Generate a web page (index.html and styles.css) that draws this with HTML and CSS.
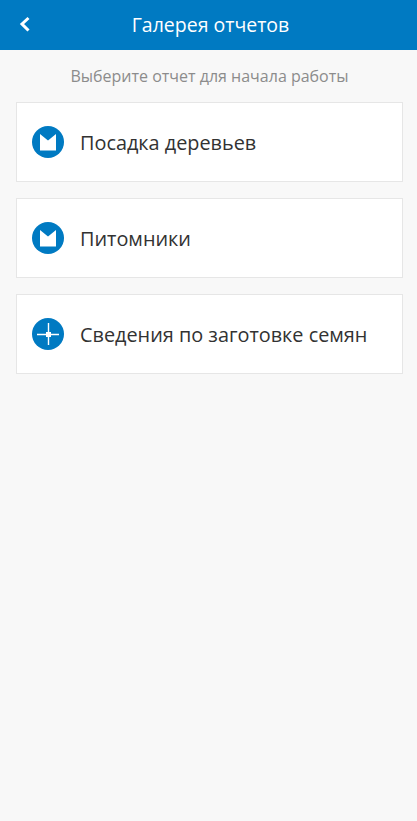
FILE: index.html
```html
<!DOCTYPE html>
<html lang="ru">
<head>
<meta charset="utf-8">
<title>Галерея отчетов</title>
<link rel="stylesheet" href="styles.css">
</head>
<body>
<header class="topbar">
  <svg class="back" width="12" height="18" viewBox="0 0 12 18"><path d="M9.5 2 L3 8 L9.5 14.5" fill="none" stroke="#fff" stroke-width="3"/></svg>
  <h1 class="title">Галерея отчетов</h1>
</header>
<main class="content">
  <p class="hint">Выберите отчет для начала работы</p>
  <ul class="list">
    <li class="card">
      <svg class="icon" width="32" height="32" viewBox="0 0 32 32"><circle cx="16" cy="16" r="16" fill="#007ac2"/><path d="M8 8 L16 14.5 L24 8 V24.5 H8 Z" fill="#fff"/></svg>
      <span class="label">Посадка деревьев</span>
    </li>
    <li class="card">
      <svg class="icon" width="32" height="32" viewBox="0 0 32 32"><circle cx="16" cy="16" r="16" fill="#007ac2"/><path d="M8 8 L16 14.5 L24 8 V24.5 H8 Z" fill="#fff"/></svg>
      <span class="label">Питомники</span>
    </li>
    <li class="card">
      <svg class="icon" width="32" height="32" viewBox="0 0 32 32"><circle cx="16" cy="16" r="16" fill="#007ac2"/><path d="M16.5 5 V27 M5 16.5 H27" stroke="#fff" stroke-width="1.4"/><rect x="14" y="14" width="5" height="5" fill="#fff"/></svg>
      <span class="label">Сведения по заготовке семян</span>
    </li>
  </ul>
</main>
</body>
</html>
```
FILE: styles.css
```css
* { box-sizing: border-box; }
html, body { margin: 0; height: 100%; }
body {
  background: #f8f8f8;
  font-family: "Open Sans", sans-serif;
  color: #323232;
}
.topbar {
  height: 50px;
  background: #007ac2;
  display: flex;
  align-items: center;
  justify-content: center;
  position: relative;
}
.back { position: absolute; left: 19px; top: 16px; }
.title {
  margin: 0 0 0 4px;
  font-size: 19.5px;
  font-weight: 400;
  color: #fff;
  line-height: 50px;
}
.content { padding: 0 14px 0 16px; }
.hint {
  margin: 0;
  height: 52px;
  line-height: 52px;
  text-align: center;
  font-size: 16px;
  color: #8c8c8c;
}
.list {
  list-style: none;
  margin: 0;
  padding: 0;
  display: flex;
  flex-direction: column;
  gap: 16px;
}
.card {
  height: 80px;
  background: #fff;
  border: 1px solid #e6e6e6;
  display: flex;
  align-items: center;
  padding-left: 15px;
  gap: 16px;
}
.icon { flex: none; }
.label { font-size: 19.85px; }
```
